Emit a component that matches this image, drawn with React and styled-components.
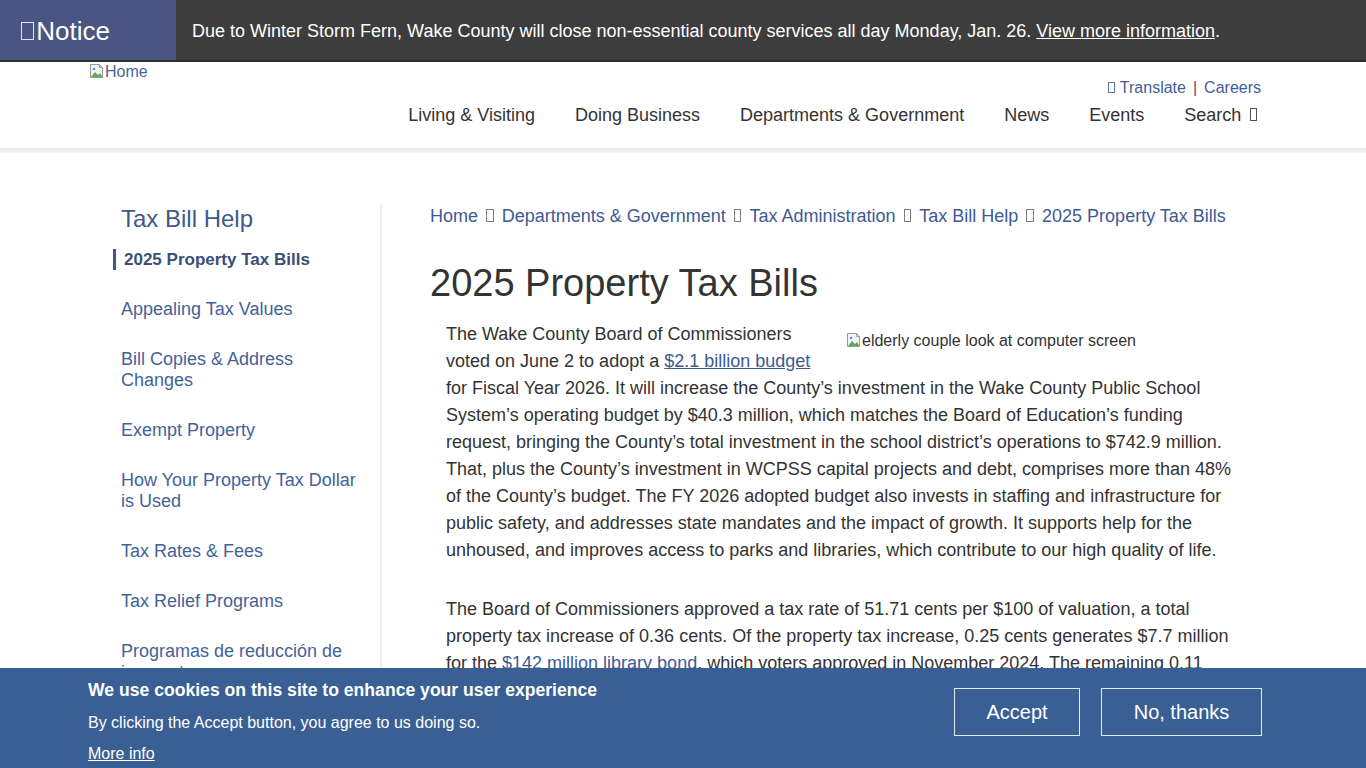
import React from 'react';
import styled, { createGlobalStyle } from 'styled-components';

const GlobalStyle = createGlobalStyle`
  body {
    margin: 0;
    font-family: 'Liberation Sans', Arial, 'DejaVu Sans', sans-serif;
    color: #333;
    background: #fff;
  }
  a {
    text-decoration: none;
  }
`;

// stands in for the icon-font glyph that failed to load (shown as an empty box)
const Tofu = styled.span`
  display: inline-block;
  box-sizing: border-box;
  width: ${({ $w = 0.42 }) => $w}em;
  height: 0.72em;
  margin: 0 ${({ $m = 0.06 }) => $m}em;
  border: 1px solid currentColor;
  vertical-align: -0.02em;
  opacity: 0.85;
`;

const NoticeBar = styled.div`
  display: flex;
  height: 60px;
  background: #3d3d3d;
  border-bottom: 2px solid #2f2f2f;
`;

const NoticeLabel = styled.div`
  display: flex;
  align-items: center;
  width: 158px;
  padding: 2px 0 0 18px;
  background: #4a5581;
  color: #fff;
  font-size: 26px;
`;

const NoticeText = styled.p`
  display: flex;
  align-items: center;
  margin: 0;
  padding: 2px 0 0 16px;
  color: #fff;
  font-size: 18px;

  a {
    color: #fff;
    text-decoration: underline;
  }
`;

const Header = styled.header`
  display: flex;
  justify-content: space-between;
  height: 86px;
  padding: 0 105px 0 89px;
`;

const Logo = styled.a`
  display: flex;
  align-items: flex-start;
  height: 18px;
  padding-top: 1px;
  color: #4a6694;
  font-size: 16px;
  line-height: 18px;
`;

const HeaderRight = styled.div`
  display: flex;
  flex-direction: column;
  align-items: flex-end;
  padding-top: 16px;
`;

const Utility = styled.div`
  display: flex;
  gap: 7px;
  color: #3f5d99;
  font-size: 16px;
  line-height: 20px;

  a {
    color: inherit;
  }
  span.sep {
    color: #555;
  }
`;

const Nav = styled.nav`
  display: flex;
  gap: 40px;
  margin-top: 5px;
  font-size: 18px;
  line-height: 24px;

  a {
    color: #333;
  }
`;

const HeaderShade = styled.div`
  height: 5px;
  background: linear-gradient(#e6e6e6, #f7f7f7);
`;

const Content = styled.div`
  display: flex;
  padding: 51px 0 0 113px;
`;

const Sidebar = styled.aside`
  width: 267px;
  min-height: 620px;
  border-right: 2px solid #ececec;
`;

const SideTitle = styled.h2`
  margin: 0 0 15px;
  padding-left: 8px;
  color: #3e5a89;
  font-size: 24px;
  font-weight: 400;
  line-height: 30px;
`;

const SideList = styled.ul`
  margin: 0;
  padding: 0;
  list-style: none;
`;

const SideItem = styled.li`
  margin: 0 0 29px ${({ $active }) => ($active ? '0' : '-3px')};
  padding: 0 22px 0 8px;
  border-left: 3px solid ${({ $active }) => ($active ? '#3e5a89' : 'transparent')};
  font-size: ${({ $active }) => ($active ? '17px' : '18px')};
  font-weight: ${({ $active }) => ($active ? 700 : 400)};
  line-height: 21px;

  a {
    color: ${({ $active }) => ($active ? '#3a4f78' : '#44629a')};
  }
`;

const Main = styled.main`
  width: 804px;
  margin-left: 48px;
`;

const Crumbs = styled.nav`
  display: flex;
  align-items: baseline;
  gap: 7px;
  font-size: 18px;
  line-height: 24px;

  a {
    color: #3e5a95;
  }
  span {
    color: #666;
  }
`;

const Title = styled.h1`
  margin: 33px 0 16px;
  color: #333;
  font-size: 38px;
  font-weight: 400;
  line-height: 44px;
`;

const Body = styled.div`
  padding-left: 16px;
  font-size: 18px;
  line-height: 27px;

  p {
    margin: 0 0 32px;
  }

  a {
    color: #3e5a95;
    text-decoration: underline;
  }
`;

const Figure = styled.span`
  float: right;
  display: flex;
  align-items: flex-start;
  width: 388px;
  height: 30px;
  margin: 11px 0 10px 20px;
  font-size: 16px;
  line-height: 18px;
  color: #333;
`;

const CookieBanner = styled.div`
  position: fixed;
  left: 0;
  right: 0;
  bottom: 0;
  display: flex;
  justify-content: space-between;
  height: 100px;
  padding: 0 104px 0 88px;
  background: #3a5f94;
  color: #fff;
`;

const CookieText = styled.div`
  padding-top: 11px;

  h3 {
    margin: 0;
    font-size: 17.6px;
    font-weight: 700;
    line-height: 22px;
  }
  p {
    margin: 12px 0 0;
    font-size: 16px;
    line-height: 20px;
  }
  a {
    display: block;
    margin-top: 11px;
    color: #fff;
    font-size: 16px;
    line-height: 20px;
    text-decoration: underline;
  }
`;

const CookieButtons = styled.div`
  display: flex;
  gap: 21px;
  padding-top: 20px;
`;

const CookieButton = styled.button`
  height: 48px;
  width: ${({ $w }) => $w}px;
  border: 1px solid #d8f0ff;
  background: transparent;
  color: #fff;
  font-family: inherit;
  font-size: 20px;
`;

const BrokenImage = () => (
  <svg width="16" height="16" viewBox="0 0 16 16" style={{ flex: 'none' }}>
    <path d="M1.5 1.5h9l3 3v10h-12z" fill="#f4f4f4" stroke="#9a9a9a" />
    <path d="M10.5 1.5v3h3" fill="none" stroke="#9a9a9a" />
    <path d="M2 14l4-5 3 3 2-2 2.5 4z" fill="#5fa85a" />
    <circle cx="5" cy="6" r="1.3" fill="#5b8fd6" />
  </svg>
);

const navItems = ['Living & Visiting', 'Doing Business', 'Departments & Government', 'News', 'Events'];
const sideItems = [
  '2025 Property Tax Bills',
  'Appealing Tax Values',
  'Bill Copies & Address Changes',
  'Exempt Property',
  'How Your Property Tax Dollar is Used',
  'Tax Rates & Fees',
  'Tax Relief Programs',
  'Programas de reducción de impuestos',
];
const crumbs = ['Home', 'Departments & Government', 'Tax Administration', 'Tax Bill Help'];

const App = () => (
  <>
    <GlobalStyle />
    <NoticeBar>
      <NoticeLabel>
        <Tofu $w={0.5} $m={0.1} />
        Notice
      </NoticeLabel>
      <NoticeText>
        Due to Winter Storm Fern, Wake County will close non-essential county services all day
        Monday, Jan. 26.&nbsp;<a href="#">View more information</a>.
      </NoticeText>
    </NoticeBar>

    <Header>
      <Logo href="#">
        <BrokenImage />
        Home
      </Logo>
      <HeaderRight>
        <Utility>
          <a href="#">
            <Tofu /> Translate
          </a>
          <span className="sep">|</span>
          <a href="#">Careers</a>
        </Utility>
        <Nav>
          {navItems.map(item => (
            <a href="#" key={item}>{item}</a>
          ))}
          <a href="#">
            Search <Tofu $m={0.2} />
          </a>
        </Nav>
      </HeaderRight>
    </Header>
    <HeaderShade />

    <Content>
      <Sidebar>
        <SideTitle>Tax Bill Help</SideTitle>
        <SideList>
          {sideItems.map((item, i) => (
            <SideItem key={item} $active={i === 0}>
              <a href="#">{item}</a>
            </SideItem>
          ))}
        </SideList>
      </Sidebar>

      <Main>
        <Crumbs>
          {crumbs.map(c => (
            <React.Fragment key={c}>
              <a href="#">{c}</a>
              <span><Tofu /></span>
            </React.Fragment>
          ))}
          <a href="#">2025 Property Tax Bills</a>
        </Crumbs>
        <Title>2025 Property Tax Bills</Title>
        <Body>
          <p>
            <Figure>
              <BrokenImage />
              elderly couple look at computer screen
            </Figure>
            The Wake County Board of Commissioners voted on June 2 to adopt a{' '}
            <a href="#">$2.1 billion budget</a> for Fiscal Year 2026. It will increase the County’s
            investment in the Wake County Public School System’s operating budget by $40.3 million,
            which matches the Board of Education’s funding request, bringing the County’s total
            investment in the school district’s operations to $742.9 million. That, plus the
            County’s investment in WCPSS capital projects and debt, comprises more than 48% of the
            County’s budget. The FY 2026 adopted budget also invests in staffing and infrastructure
            for public safety, and addresses state mandates and the impact of growth. It supports
            help for the unhoused, and improves access to parks and libraries, which contribute to
            our high quality of life.
          </p>
          <p>
            The Board of Commissioners approved a tax rate of 51.71 cents per $100 of valuation, a
            total property tax increase of 0.36 cents. Of the property tax increase, 0.25 cents
            generates $7.7 million for the{' '}
            <a href="#" style={{ textDecoration: 'none' }}>$142 million library bond</a>, which
            voters approved in November 2024. The remaining 0.11 cents supports the County’s
            general operating needs.
          </p>
        </Body>
      </Main>
    </Content>

    <CookieBanner>
      <CookieText>
        <h3>We use cookies on this site to enhance your user experience</h3>
        <p>By clicking the Accept button, you agree to us doing so.</p>
        <a href="#">More info</a>
      </CookieText>
      <CookieButtons>
        <CookieButton $w={126}>Accept</CookieButton>
        <CookieButton $w={161}>No, thanks</CookieButton>
      </CookieButtons>
    </CookieBanner>
  </>
);

export default App;
